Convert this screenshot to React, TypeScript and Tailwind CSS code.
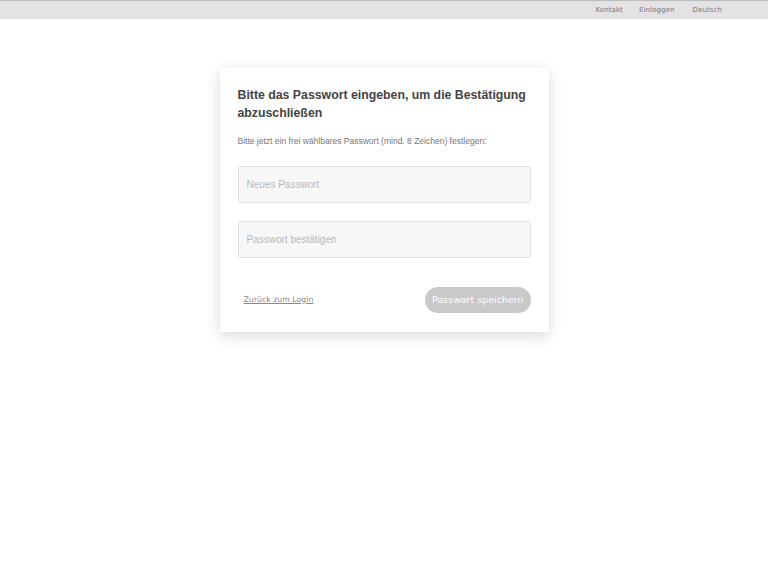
import React from "react";

export default function App() {
  return (
    <div className="min-h-[576px] bg-white" style={{ fontFamily: '"Liberation Sans", Arial, sans-serif' }}>
      <div className="h-[19px] border-t border-[#bdbdbd] bg-[#e4e2e4] flex items-center justify-end pr-[46px]">
        <nav className="flex gap-[16px] text-[7px] text-[#777] tracking-[0.1px]" style={{ fontFamily: '"DejaVu Sans", sans-serif' }}>
          <span>Kontakt</span>
          <span>Einloggen</span>
          <span className="ml-[2px]">Deutsch</span>
        </nav>
      </div>
      <div className="flex justify-center pt-[49px]">
        <div className="w-[329px] bg-white shadow-[0_4px_14px_rgba(0,0,0,0.15)] px-[18px] pt-[18px] pb-[19px]">
          <h1 className="text-[12.3px] font-bold leading-[18px] text-[#444]">
            Bitte das Passwort eingeben, um die Bestätigung abzuschließen
          </h1>
          <p className="mt-[13px] text-[8.5px] text-[#777]">
            Bitte jetzt ein frei wählbares Passwort (mind. 8 Zeichen) festlegen:
          </p>
          <div className="mt-[18px] flex flex-col gap-[18px]">
            <input
              type="password"
              placeholder="Neues Passwort"
              className="h-[37px] w-full rounded-[3px] border border-[#e2e2e2] bg-[#f7f7f7] px-[8px] text-[10px] text-[#444] placeholder:text-[#b8b8b8] outline-none"
            />
            <input
              type="password"
              placeholder="Passwort bestätigen"
              className="h-[37px] w-full rounded-[3px] border border-[#e2e2e2] bg-[#f7f7f7] px-[8px] text-[10px] text-[#444] placeholder:text-[#b8b8b8] outline-none"
            />
          </div>
          <div className="mt-[29px] flex items-center justify-between">
            <a
              href="#"
              className="ml-[6px] text-[7.8px] text-[#888] underline"
              style={{ fontFamily: '"DejaVu Sans", sans-serif' }}
            >
              Zurück zum Login
            </a>
            <button
              className="h-[26px] rounded-full bg-[#c9c9c9] px-[7px] text-[9.5px] text-white"
              style={{ fontFamily: '"DejaVu Sans", sans-serif' }}
            >
              Passwort speichern
            </button>
          </div>
        </div>
      </div>
    </div>
  );
}
